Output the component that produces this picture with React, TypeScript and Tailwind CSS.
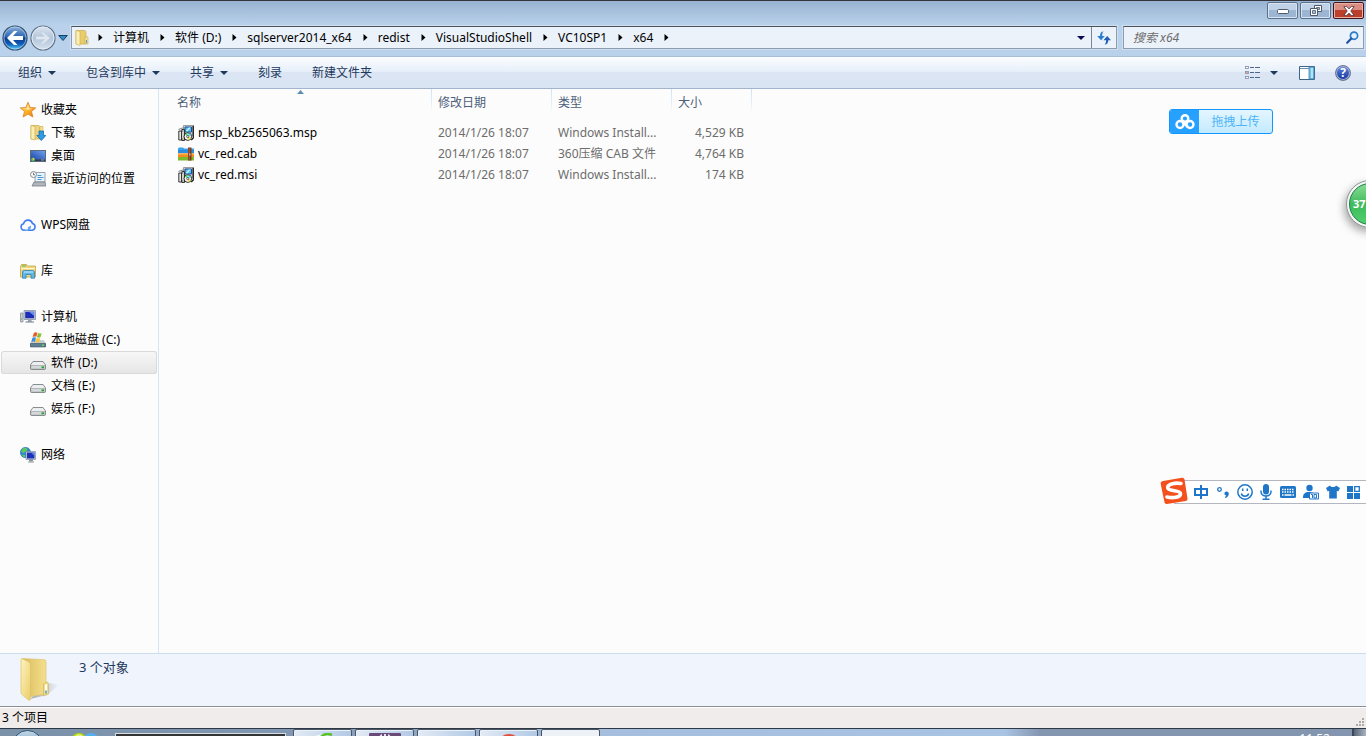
import { useState, type ReactNode } from 'react';

type IconName =
  | 'star' | 'download' | 'desktop' | 'recent' | 'cloud' | 'library'
  | 'computer' | 'systemDrive' | 'drive' | 'network' | 'installer' | 'archive';

const icons: Record<IconName, ReactNode> = {
  star: (
    <>
      <defs>
        <linearGradient id="star" x1="0" y1="0" x2="1" y2="1">
          <stop offset="0" stopColor="#ffe08a" />
          <stop offset=".5" stopColor="#fdb52b" />
          <stop offset="1" stopColor="#e8720c" />
        </linearGradient>
      </defs>
      <path d="M8 .3l2.200 5.200 5.500.4-4.200 3.600 1.400 5.500L8 12.100l-4.900 2.900 1.400-5.500L.3 5.900l5.500-.4z" fill="url(#star)" stroke="#d9801f" strokeWidth=".8" strokeLinejoin="round" />
      <path d="M8 2.500l1.300 3.800 3.200.3-4.300 1.400-4.700-1.400 3.200-.3z" fill="#fff3c4" opacity=".7" />
    </>
  ),
  download: (
    <>
      <path d="M1 .5h8l1 1V14H1z" fill="#ecd37c" stroke="#c9a945" strokeWidth=".7" />
      <path d="M1 .5l4 1V15l-4-1z" fill="#fbeeb4" stroke="#c9a945" strokeWidth=".6" />
      <path d="M10 1.500h3V8h-3z" fill="#f6e39c" stroke="#c9a945" strokeWidth=".6" />
      <path d="M9 6h4.500v4.500h2.300L11.300 15.500 6.800 10.500H9z" fill="#2f9be0" stroke="#1668b4" strokeWidth=".8" />
    </>
  ),
  desktop: (
    <>
      <defs>
        <linearGradient id="desk" x1="0" y1="1" x2="1" y2="0">
          <stop offset="0" stopColor="#1c46a8" />
          <stop offset="1" stopColor="#6ea0ec" />
        </linearGradient>
      </defs>
      <rect x="0" y="2" width="16" height="12" fill="#5d6b80" />
      <rect x="1" y="3" width="14" height="8.500" fill="url(#desk)" />
      <path d="M1 11.500h14V13H1z" fill="#2d3a50" />
      <circle cx="3" cy="11.500" r="1.900" fill="#55b36c" />
      <circle cx="3.400" cy="11" r=".9" fill="#f0c93c" />
      <path d="M11 12h3" stroke="#b9c6da" strokeWidth=".7" />
    </>
  ),
  recent: (
    <>
      <path d="M5 1.500h10V11H5z" fill="#eaf3fb" stroke="#8a98a6" strokeWidth=".9" />
      <path d="M7.500 4.500h4M7.500 6.500h6M7.500 8.500h4" stroke="#3f9bdc" strokeWidth="1.200" />
      <path d="M4 11h11l1 4H2z" fill="#b0b5ba" stroke="#767d84" strokeWidth=".8" />
      <circle cx="3.500" cy="3.500" r="3" fill="#f6f8fa" stroke="#858d95" />
      <path d="M3.500 1.800v2h1.500" stroke="#5f6972" strokeWidth=".9" fill="none" />
    </>
  ),
  cloud: (
    <>
      <path d="M5 13.200H4.200A3.300 3.300 0 0 1 3.600 6.700a4.600 4.600 0 0 1 8.900-.3 3.500 3.500 0 0 1-.3 6.800H8.200" fill="none" stroke="#3f7df0" strokeWidth="1.600" strokeLinecap="round" />
      <path d="M5 13.200c2.500.3 5-.8 5.200-3.300l-1.700.9" fill="none" stroke="#5aa0f5" strokeWidth="1.500" strokeLinecap="round" />
    </>
  ),
  library: (
    <>
      <path d="M.5 3.500V14h15V3H7.500L6.500 1.500H1.500z" fill="#efd883" stroke="#c2a243" strokeWidth=".8" />
      <path d="M2 3h4" stroke="#6cbf4d" strokeWidth="1.200" />
      <path d="M.8 5.500h14.400" stroke="#fff5c8" />
      <path d="M2.500 15.200V9c0-1 .8-1.500 1.800-1.500h8.400c1 0 1.800.5 1.800 1.500v6.200h-3.500V11.500H6v3.700z" fill="#62b6e6" stroke="#3182ba" strokeWidth=".8" />
      <path d="M4 9h9" stroke="#c9ebfb" />
    </>
  ),
  computer: (
    <>
      <path d="M.5 4h2.500v9H.5z" fill="#c9ced5" stroke="#7c848e" strokeWidth=".7" />
      <path d="M1 10h1" stroke="#43b64a" />
      <path d="M4 1.500h11.500v9H4z" fill="#cfd6df" stroke="#7b8591" strokeWidth=".7" />
      <path d="M5.200 2.700h9v6.600h-9z" fill="#1c2fb4" />
      <path d="M9 2.700h5.200v4.300z" fill="#6f8bf0" />
      <path d="M8.300 10.500h3l.7 2.500H7.500z" fill="#98a1ac" />
      <path d="M5.500 13h8.500" stroke="#8a929c" strokeWidth="1.200" />
    </>
  ),
  systemDrive: (
    <>
      <path d="M2.500 8.500h11L16 11.500V15H0v-3.500z" fill="#9aa3ad" />
      <path d="M2.500 8.500h11l2.200 3H.4z" fill="#c5ccd3" />
      <path d="M.5 11.500h15V15H.5z" fill="#5d7f92" stroke="#47535e" strokeWidth=".6" />
      <path d="M12 13.300h2" stroke="#55e05b" strokeWidth="1.500" />
      <path d="M3.800.9c1.200-.9 2.400-.9 3.600-.2L6.300 4.900c-1.200-.6-2.400-.5-3.600.2z" fill="#ea5a26" />
      <path d="M8.100 1c1.200.6 2.400.6 3.600-.1l-1.200 4.300c-1.200.6-2.400.6-3.600 0z" fill="#86bf3a" />
      <path d="M2.400 5.800c1.200-.7 2.400-.7 3.600-.1L4.900 9.900c-1.200-.6-2.400-.5-3.600.2z" fill="#3d8de0" />
      <path d="M6.600 6c1.200.6 2.400.6 3.600 0L9.100 10.100c-1.200.6-2.400.6-3.600 0z" fill="#f8c62c" />
    </>
  ),
  drive: (
    <>
      <path d="M3 6.500h10L15.500 10v3.500c0 .6-.4 1-1 1h-13c-.6 0-1-.4-1-1V10z" fill="#b4b7ba" stroke="#74787c" strokeWidth=".8" strokeLinejoin="round" />
      <path d="M3.200 6.900h9.600l2.200 3.200H1z" fill="#eceeef" />
      <path d="M1.500 11h13v2.500h-13z" fill="#d5d8da" />
      <path d="M11.500 12.300h2.500" stroke="#1fa52c" strokeWidth="1.800" />
    </>
  ),
  network: (
    <>
      <circle cx="5.500" cy="5.500" r="5.200" fill="#2f86d2" stroke="#2768a6" strokeWidth=".5" />
      <path d="M3 1.200c2 0 4-.6 4.500 1.500L5.500 5 3 6 1 4.500zM2 7.500l3 .5v2.300c-1.500 0-2.800-1.300-3-2.800z" fill="#5cc95a" />
      <path d="M6 4.500h9.500v8H6z" fill="#cdd5e0" stroke="#77828f" strokeWidth=".6" />
      <path d="M7 5.500h7.500v6H7z" fill="#1b31ba" />
      <path d="M11 5.500h3.500V9z" fill="#6d8bf2" />
      <path d="M9.500 12.500h3v1.500h-3zM8 15h6" fill="#8b949e" stroke="#8b949e" />
    </>
  ),
  installer: (
    <>
      <path d="M5.500 .5h9V11h-9z" fill="#d5d2ca" stroke="#8a8a8a" strokeWidth=".8" />
      <path d="M15.300 .5V13l-2 2" stroke="#111" strokeWidth="1.200" fill="none" />
      <path d="M7 2h6.500v5H7z" fill="#4fc2ef" stroke="#1a4fa0" />
      <path d="M7.800 6l3-3.500h2L9.300 6.500z" fill="#c6f1ff" />
      <path d="M.8 6h2.700v9H.8z" fill="#e6e5e0" stroke="#222" strokeWidth=".9" />
      <path d="M3.800 4.500h2.700v11H3.800z" fill="#c2c1bb" stroke="#222" strokeWidth=".9" />
      <path d="M.5 4.500l4-1.500h2" stroke="#888" strokeWidth="1.200" fill="none" />
      <path d="M4.800 7v6" stroke="#fff" strokeWidth=".8" />
      <circle cx="9.800" cy="11.600" r="3.800" fill="#f4f5f1" stroke="#111" strokeWidth=".9" />
      <path d="M9.800 11.600L6.900 9.600a3.600 3.600 0 0 1 2.400-1.500z" fill="#3fdc74" />
      <path d="M9.800 11.600l3.200 1.500a3.600 3.600 0 0 1-2.700 1.900z" fill="#f2e24a" />
      <path d="M9.800 11.600l1-3.400a3.600 3.600 0 0 1 2.200 1.700z" fill="#4fd4f0" />
      <circle cx="9.800" cy="11.600" r="1.100" fill="#fff" stroke="#222" strokeWidth=".7" />
    </>
  ),
  archive: (
    <>
      <path d="M0 2.500L1 1.500h4l1 1h10V7H0z" fill="#3aa2ea" />
      <path d="M0 4h16v3.500H0z" fill="#2d8bdc" />
      <path d="M0 7.500h16v4H0z" fill="#f58a1f" />
      <path d="M0 7.500h16v1H0z" fill="#ffc062" />
      <path d="M0 11h16v3.500H0z" fill="#7cb92c" />
      <path d="M10 1.500h3.500v13H10z" fill="#7a3a1d" />
      <path d="M11.200 2v12" stroke="#b5714a" strokeWidth=".8" />
      <path d="M11 7.500h1.500v2H11z" fill="#c9b9a4" />
    </>
  ),
};

function Icon({ name }: { name: IconName }) {
  return (
    <svg viewBox="0 0 16 16" className="w-4 h-4 shrink-0" aria-hidden="true">
      {icons[name]}
    </svg>
  );
}

function DownArrow({ className = 'text-[#1e395b]' }: { className?: string }) {
  return (
    <svg viewBox="0 0 8 4" className={`w-2 h-1 shrink-0 ${className}`} aria-hidden="true">
      <path d="M0 0h8L4 4z" fill="currentColor" />
    </svg>
  );
}

function FolderArt({ className }: { className: string }) {
  return (
    <svg viewBox="0 0 40 46" className={className} aria-hidden="true">
      <defs>
        <linearGradient id="folderBack" x1="0" y1="0" x2="1" y2="0">
          <stop offset="0" stopColor="#d9b95a" />
          <stop offset="1" stopColor="#f5e08e" />
        </linearGradient>
        <linearGradient id="folderFront" x1="0" y1="0" x2="1" y2="1">
          <stop offset="0" stopColor="#fdf3bd" />
          <stop offset="1" stopColor="#ecce6a" />
        </linearGradient>
        <linearGradient id="folderShade" x1="0" y1="0" x2="1" y2="0">
          <stop offset="0" stopColor="#8a94a4" stopOpacity=".8" />
          <stop offset="1" stopColor="#8a94a4" stopOpacity="0" />
        </linearGradient>
      </defs>
      <path d="M11 42L31 26l9 2-12 10z" fill="url(#folderShade)" />
      <path d="M3 1.500l22 1.200q2 0 2 2V37l-17 3z" fill="url(#folderBack)" stroke="#d9bd62" strokeWidth=".6" />
      <path d="M24.500 27l3-2q2 0 2 2v10l-5 2z" fill="#f3dc86" stroke="#cfae4d" strokeWidth=".6" />
      <path d="M27 27.500v8" stroke="#fff" strokeWidth="2" />
      <path d="M27 33.500v3" stroke="#4b9be0" strokeWidth="1.600" />
      <path d="M2 3q0-2 2-1l6 3q1.500 1 1.500 3v34q0 2-2 1L3.500 38Q2 37 2 35z" fill="url(#folderFront)" stroke="#dcc067" strokeWidth=".7" />
    </svg>
  );
}

const crumbs = ['计算机', '软件 (D:)', 'sqlserver2014_x64', 'redist', 'VisualStudioShell', 'VC10SP1', 'x64'];

const toolbar = [
  { label: '组织', menu: true },
  { label: '包含到库中', menu: true },
  { label: '共享', menu: true },
  { label: '刻录', menu: false },
  { label: '新建文件夹', menu: false },
];

interface NavItem {
  label: string;
  icon: IconName;
}

const navGroups: { head: NavItem; items: NavItem[] }[] = [
  {
    head: { label: '收藏夹', icon: 'star' },
    items: [
      { label: '下载', icon: 'download' },
      { label: '桌面', icon: 'desktop' },
      { label: '最近访问的位置', icon: 'recent' },
    ],
  },
  { head: { label: 'WPS网盘', icon: 'cloud' }, items: [] },
  { head: { label: '库', icon: 'library' }, items: [] },
  {
    head: { label: '计算机', icon: 'computer' },
    items: [
      { label: '本地磁盘 (C:)', icon: 'systemDrive' },
      { label: '软件 (D:)', icon: 'drive' },
      { label: '文档 (E:)', icon: 'drive' },
      { label: '娱乐 (F:)', icon: 'drive' },
    ],
  },
  { head: { label: '网络', icon: 'network' }, items: [] },
];

const files: { name: string; icon: IconName; date: string; type: string; size: string }[] = [
  { name: 'msp_kb2565063.msp', icon: 'installer', date: '2014/1/26 18:07', type: 'Windows Install...', size: '4,529 KB' },
  { name: 'vc_red.cab', icon: 'archive', date: '2014/1/26 18:07', type: '360压缩 CAB 文件', size: '4,764 KB' },
  { name: 'vc_red.msi', icon: 'installer', date: '2014/1/26 18:07', type: 'Windows Install...', size: '174 KB' },
];

const headCell =
  'h-[26px] pt-[2px] pl-[6px] text-left font-normal bg-[linear-gradient(#d3e3f1,#e4edf6_60%,#fcfcfc)] bg-[length:1px_23px] bg-[position:right_top] bg-no-repeat';

function TitleBar() {
  const glass = 'flex h-[17px] items-center justify-center rounded-[2px] border border-[#5c7189] shadow-[inset_0_0_0_1px_#d6e4f2] bg-linear-to-b from-[#bfd2e7] from-50% to-[#9bb5d2] to-50%';
  return (
    <div className="flex h-[25px] shrink-0 justify-end gap-[2px] border-t border-[#33343a] bg-linear-to-b from-[#98b3d2] to-[#b9d1ea] pr-[2px] pt-px">
      <button aria-label="最小化" className={`w-[31px] ${glass}`}>
        <svg viewBox="0 0 12 6" className="h-[6px] w-3"><rect x=".5" y="1.500" width="11" height="4" rx="1" fill="#fff" stroke="#4c5a6c" /></svg>
      </button>
      <button aria-label="还原" className={`w-[31px] ${glass}`}>
        <svg viewBox="0 0 12 11" className="h-[11px] w-3">
          <path d="M4.500.5h7v6h-7z" fill="#fff" stroke="#4c5a6c" />
          <path d="M6.500 2.500h3v2h-3z" fill="#a5bcd6" stroke="#4c5a6c" strokeWidth=".8" />
          <path d="M.5 3.500h7v7h-7z" fill="#fff" stroke="#4c5a6c" />
          <path d="M2.500 5.500h3v3h-3z" fill="#a5bcd6" stroke="#4c5a6c" strokeWidth=".8" />
        </svg>
      </button>
      <button aria-label="关闭" className="flex h-[17px] w-[31px] items-center justify-center rounded-[2px] border border-[#43131a] bg-linear-to-b from-[#d98d83] from-50% to-[#bb3f2b] to-50% shadow-[inset_0_0_0_1px_#e9b1a8]">
        <svg viewBox="0 0 12 10" className="h-[10px] w-3">
          <path d="M.8.6h3L6 2.900 8.200.6h3L7.800 5l3.400 4.400h-3L6 7.100 3.800 9.400h-3L4.200 5z" fill="#fff" stroke="#5a3a42" strokeWidth=".9" />
        </svg>
      </button>
    </div>
  );
}

function NavButtons() {
  return (
    <div className="flex w-[70px] shrink-0 items-center gap-[2px] pl-[2px]">
      <button aria-label="后退" className="h-[26px] w-[26px]">
        <svg viewBox="0 0 26 26" className="h-[26px] w-[26px]">
          <defs>
            <linearGradient id="back" x1="0" y1="0" x2="0" y2="1">
              <stop offset="0" stopColor="#8fb4dd" />
              <stop offset=".45" stopColor="#2c66b4" />
              <stop offset=".5" stopColor="#0b3c8c" />
              <stop offset=".75" stopColor="#0f5cba" />
              <stop offset="1" stopColor="#5fdcff" />
            </linearGradient>
          </defs>
          <circle cx="13" cy="13" r="12" fill="url(#back)" stroke="#38506f" strokeWidth="1.200" />
          <circle cx="13" cy="13" r="11" fill="none" stroke="#c5def3" strokeOpacity=".6" />
          <path d="M5 13l7-7h3.500l-4.500 5h10v4H11l4.500 5H12z" fill="#fff" />
        </svg>
      </button>
      <button aria-label="前进" className="h-[26px] w-[26px]">
        <svg viewBox="0 0 26 26" className="h-[26px] w-[26px]">
          <defs>
            <linearGradient id="fwd" x1="0" y1="0" x2="0" y2="1">
              <stop offset="0" stopColor="#dbe6f1" />
              <stop offset=".5" stopColor="#b3c5d9" />
              <stop offset="1" stopColor="#d5e2ef" />
            </linearGradient>
          </defs>
          <circle cx="13" cy="13" r="12" fill="url(#fwd)" stroke="#5f7188" strokeWidth="1.200" />
          <circle cx="13" cy="13" r="11" fill="none" stroke="#e4edf6" />
          <path d="M20 13l-7-6h-2.500l4 4.500H6v3h8.500l-4 4.500H13z" fill="#dfe8f1" stroke="#c3d0de" strokeWidth=".6" />
        </svg>
      </button>
      <button aria-label="最近的页面">
        <svg viewBox="0 0 10 6" className="h-[6px] w-[10px]"><path d="M.7.500h8.600L5 5.500z" fill="#2f8ec5" stroke="#1d3d66" /></svg>
      </button>
    </div>
  );
}

function AddressRow() {
  const [query, setQuery] = useState('');
  return (
    <div className="flex h-[31px] shrink-0 items-start bg-[#b9d1ea] pr-[2px]">
      <NavButtons />
      <div className="ml-px mt-px flex h-[23px] min-w-0 flex-1 items-center border border-[#8c9db0] border-t-[#4a525c] bg-[#ebf2fa] outline outline-[#cfdff0]">
        <svg viewBox="0 0 14 16" className="ml-[3px] h-4 w-[14px] shrink-0" aria-hidden="true">
          <path d="M1 .5h9l1 1V14H1z" fill="#e8cc6e" stroke="#cfae4a" strokeWidth=".7" />
          <path d="M1 .5l4 1V15.500L1 14z" fill="#fbeeb4" stroke="#cfae4a" strokeWidth=".6" />
          <path d="M10 7h3v7h-3z" fill="#f6e39c" stroke="#c9a945" strokeWidth=".6" />
          <path d="M11.500 10v3" stroke="#4b9be0" />
        </svg>
        <nav aria-label="地址" className="ml-[9px] flex flex-1 items-center">
          {crumbs.map((crumb) => (
            <span key={crumb} className="flex items-center">
              <CrumbArrow />
              <a href="#" className="pr-[11px] pl-[10px] whitespace-nowrap text-black">{crumb}</a>
            </span>
          ))}
          <CrumbArrow />
        </nav>
        <button aria-label="以前的位置" className="flex h-full w-5 items-center justify-center">
          <DownArrow className="text-[#0a0a50]" />
        </button>
        <button aria-label="刷新" className="flex h-full w-[25px] items-center justify-center border-l border-[#7a8796]">
          <svg viewBox="0 0 14 14" className="h-[14px] w-[14px]">
            <path d="M6.500 .5C4 .5 3 2.500 3 5H.2L4 9.200 7.800 5H5.200C5.200 3 5.500 1.500 6.500.5z" fill="#2c7fd0" />
            <path d="M7.500 13.500c2.500 0 3.800-1.500 3.800-4.300H14L10.200 5 6.400 9.200h2.700c0 1.800-.4 3.300-1.600 4.300z" fill="#2260b5" />
          </svg>
        </button>
      </div>
      <div className="ml-[6px] mt-px flex h-[23px] w-[241px] items-center border border-[#8c9db0] border-t-[#4a525c] bg-[#ebf2fa] pr-1 outline outline-[#cfdff0]">
        <input
          aria-label="搜索 x64"
          placeholder="搜索 x64"
          value={query}
          onChange={(e) => setQuery(e.target.value)}
          className="min-w-0 flex-1 bg-transparent pl-[9px] outline-none placeholder:italic placeholder:text-[#6d6d6d]"
        />
        <button aria-label="搜索">
          <svg viewBox="0 0 13 13" className="h-[13px] w-[13px]">
            <circle cx="8" cy="4.700" r="3.600" fill="#e3f2fd" stroke="#2a7bc8" strokeWidth="1.700" />
            <path d="M5.300 7.500L1.200 11.700" stroke="#1d56a5" strokeWidth="2.200" strokeLinecap="round" />
          </svg>
        </button>
      </div>
    </div>
  );
}

function CrumbArrow() {
  return (
    <svg viewBox="0 0 5 7" className="h-[7px] w-[5px] shrink-0" aria-hidden="true">
      <path d="M.5 0v7L4.500 3.500z" fill="#000" />
    </svg>
  );
}

function Toolbar() {
  return (
    <div className="flex h-[33px] shrink-0 items-center border-t border-b border-t-[#a9bfd9] border-b-[#a3b4cf] bg-[linear-gradient(#fbfdff,#e6eff9_48%,#dbe5f4_49%,#dae5f3)] pl-[10px] pr-[14px] text-[#1e395b]">
      <div className="flex flex-1 gap-[14px]">
        {toolbar.map((item) => (
          <button key={item.label} className="flex items-center gap-[6px] px-2">
            {item.label}
            {item.menu && <DownArrow />}
          </button>
        ))}
      </div>
      <button aria-label="更改您的视图" className="flex items-center gap-[10px]">
        <svg viewBox="0 0 15 13" className="h-[13px] w-[15px]">
          {[0, 5, 10].map((y) => (
            <g key={y}>
              <rect x=".5" y={y + 0.5} width="3" height="2" fill="#fff" stroke="#7b8ba3" strokeWidth=".8" />
              <path d={`M5 ${y + 1.5}h4M10 ${y + 1.5}h5`} stroke="#4c6588" />
            </g>
          ))}
          <path d="M1.500 6.500h1" stroke="#e03a2a" />
        </svg>
        <DownArrow />
      </button>
      <button aria-label="显示预览窗格" className="ml-[21px]">
        <svg viewBox="0 0 16 14" className="h-[14px] w-4">
          <path d="M.5.5h15v13H.5z" fill="#fff" stroke="#3f648c" />
          <path d="M1 2.500h9" stroke="#6c8cb0" />
          <path d="M10 1h5v12h-5z" fill="#74c4e8" stroke="#3f7ea8" strokeWidth=".8" />
          <path d="M13 2v10" stroke="#c5effc" strokeWidth="1.500" />
        </svg>
      </button>
      <button aria-label="获取帮助" className="ml-[20px] mr-px h-4 w-4 rounded-full border border-[#6e7890] bg-linear-to-b from-[#6489df] to-[#12309c] text-xs leading-[14px] font-bold text-white shadow-[inset_0_0_0_1px_#a9b8dc]">
        ?
      </button>
    </div>
  );
}

function Sidebar() {
  const row = 'flex h-[23px] w-full items-center gap-[5px] text-left';
  return (
    <aside className="w-[159px] shrink-0 border-r border-[#d6e5f5] px-px pt-[9px]">
      <ul className="flex flex-col gap-[23px]">
        {navGroups.map(({ head, items }) => (
          <li key={head.label}>
            <button className={`${row} pl-[19px]`}>
              <Icon name={head.icon} />
              {head.label}
            </button>
            {items.map((item) => (
              <button
                key={item.label}
                className={`${row} pl-[29px] ${
                  item.label === '软件 (D:)'
                    ? 'bg-[linear-gradient(#f8f8f8,#e5e5e5)] rounded-[3px] shadow-[inset_0_0_0_1px_#d9d9d9]'
                    : ''
                }`}
              >
                <Icon name={item.icon} />
                {item.label}
              </button>
            ))}
          </li>
        ))}
      </ul>
    </aside>
  );
}

function FileTable() {
  return (
    <div className="min-w-0 flex-1">
      <table className="w-[593px] table-fixed border-collapse">
        <colgroup>
          <col className="w-[273px]" />
          <col className="w-[120px]" />
          <col className="w-[120px]" />
          <col className="w-[80px]" />
        </colgroup>
        <thead className="text-[#4c607a]">
          <tr>
            <th className={`${headCell} relative pl-[18px]`}>
              名称
              <svg viewBox="0 0 7 4" className="absolute top-px left-[138px] h-1 w-[7px]" aria-hidden="true">
                <path d="M0 4l3.500-4L7 4z" fill="#5e8fae" />
              </svg>
            </th>
            <th className={headCell}>修改日期</th>
            <th className={headCell}>类型</th>
            <th className={headCell}>大小</th>
          </tr>
        </thead>
        <tbody className="text-[#6d6d6d] before:block before:h-[7px]">
          {files.map((file) => (
            <tr key={file.name} className="h-[21px]">
              <td className="pl-[19px] text-black">
                <span className="flex items-center gap-1">
                  <Icon name={file.icon} />
                  {file.name}
                </span>
              </td>
              <td className="pl-[6px] whitespace-nowrap">{file.date}</td>
              <td className="pl-[6px] whitespace-nowrap">{file.type}</td>
              <td className="pr-2 text-right whitespace-nowrap">{file.size}</td>
            </tr>
          ))}
        </tbody>
      </table>
    </div>
  );
}

function UploadWidget() {
  return (
    <button className="absolute top-[109px] right-[93px] flex h-[25px] w-[104px] items-center overflow-hidden rounded-[3px] border border-[#1496ff] bg-linear-to-b from-[#e4f6ff] to-[#c3eaff] text-[#4db4f7]">
      <span className="flex h-full w-[29px] items-center justify-center bg-[#26a1ff]">
        <svg viewBox="0 0 20 16" className="h-4 w-5" fill="none" stroke="#fff" strokeWidth="2.400">
          <circle cx="10" cy="4.500" r="3.300" />
          <circle cx="5" cy="10.500" r="3.500" />
          <circle cx="15" cy="10.500" r="3.500" />
          <path d="M7.500 8l5.500 5" />
        </svg>
      </span>
      <span className="flex-1">拖拽上传</span>
    </button>
  );
}

function SpeedBall() {
  return (
    <div className="absolute top-[180px] -right-[28px] h-12 w-12 rounded-full border border-[#8f9692] bg-[#f4f6f5] p-[2px] shadow-[-2px_4px_8px_#0005]">
      <div className="flex h-full items-center rounded-full border border-[#1d7d48] bg-linear-to-b from-[#86dc96] via-[#3dbb5c] to-[#52d06c] pl-[3px] text-[11px] font-bold text-white">
        37
      </div>
    </div>
  );
}

function ImeBar() {
  return (
    <div className="absolute top-[480px] right-0 flex h-6 w-[192px] items-center justify-between border-y border-[#b4b7c0] bg-white pl-[19px] pr-[5px] text-[#1f76c9]">
      <svg viewBox="0 0 28 28" className="absolute -top-[4px] -left-[14px] h-7 w-7" aria-hidden="true">
        <path d="M3 4L22 .8q2-.3 2.500 1.700l3 19q.2 2-1.700 2.500L7 27q-2 .3-2.500-1.700L.7 7Q.3 4.700 3 4z" fill="#f2501c" />
        <path d="M21 6.500C16 5.500 7.500 6.500 7.700 10.700c.2 4.300 12.800 1.800 12.800 6 0 4-8 4.500-13.500 3.300" fill="none" stroke="#fff" strokeWidth="3.600" strokeLinecap="round" />
      </svg>
      <button aria-label="中文" className="w-4">
        <svg viewBox="0 0 16 16" className="h-4 w-4" fill="none" stroke="currentColor" strokeWidth="2"><path d="M2 5h12v6H2zM8 1v14" /></svg>
      </button>
      <button aria-label="标点">
        <svg viewBox="0 0 14 16" className="h-4 w-[14px]">
          <circle cx="3.500" cy="5.500" r="1.800" fill="none" stroke="currentColor" strokeWidth="1.300" />
          <path d="M10.500 7.500a2.300 2.300 0 0 1 2.300 2.300c0 2.200-1.500 3.900-3.600 4.200l-.4-1c1-.4 1.500-.9 1.500-1.500A2 2 0 0 1 10.500 7.500z" fill="currentColor" />
        </svg>
      </button>
      <button aria-label="表情">
        <svg viewBox="0 0 16 16" className="h-4 w-4" fill="none" stroke="currentColor" strokeWidth="1.500">
          <circle cx="8" cy="8" r="7.200" />
          <path d="M4.300 9.500c1 3.500 6.400 3.500 7.400 0M5.700 4.500v2.500M10.300 4.500v2.500" />
        </svg>
      </button>
      <button aria-label="语音">
        <svg viewBox="0 0 12 16" className="h-4 w-3">
          <rect x="3" y="0" width="6" height="10.500" rx="3" fill="currentColor" />
          <path d="M1 6.500v1c0 6 10 6 10 0v-1M6 12v3M2.500 15.200h7" fill="none" stroke="currentColor" strokeWidth="1.500" />
        </svg>
      </button>
      <button aria-label="软键盘">
        <svg viewBox="0 0 16 12" className="h-3 w-4">
          <rect width="16" height="12" rx="1.500" fill="currentColor" />
          <path d="M2 3.500h12M2 6h12" stroke="#fff" strokeWidth="1.300" strokeDasharray="1.500 1" />
          <path d="M2 9h1.500M4.500 9h7M12.500 9H14" stroke="#fff" strokeWidth="1.300" />
        </svg>
      </button>
      <button aria-label="登录">
        <svg viewBox="0 0 16 16" className="h-4 w-4">
          <circle cx="6.500" cy="4" r="3.200" fill="currentColor" />
          <path d="M0 13c0-3 2-5 6-5s5 1 6 3v3H0z" fill="currentColor" />
          <path d="M6.500 9h9v6h-9z" fill="#fff" stroke="currentColor" />
          <path d="M8 10.500h1.500V14M11 10.500h2.500V14H11z" fill="none" stroke="currentColor" />
        </svg>
      </button>
      <button aria-label="皮肤">
        <svg viewBox="0 0 14 14" className="h-[14px] w-[14px]"><path d="M4 .5c1 2 5 2 6 0l4 2.500-1.700 3.500-1.500-.7V13.500H3.200V5.800l-1.500.7L0 3z" fill="currentColor" /></svg>
      </button>
      <button aria-label="工具箱">
        <svg viewBox="0 0 14 13" className="h-[13px] w-[14px]">
          <path d="M0 0h6v6H0zM0 7h6v6H0zM7 7h6v6H7z" fill="currentColor" />
          <path d="M7.700.7h4.600v4.600H7.700z" fill="none" stroke="currentColor" strokeWidth="1.300" />
        </svg>
      </button>
    </div>
  );
}

function Taskbar() {
  const task = 'flex h-8 w-[59px] shrink-0 justify-center rounded-[2px] border border-[#4b5563] pt-[3px] shadow-[inset_1px_1px_0_#e9f1fa]';
  return (
    <div className="flex h-2 shrink-0 items-start overflow-hidden border-t border-[#2e3947] bg-[linear-gradient(90deg,#7b91a8_0,#8197b2_290px,#a5bedd_600px,#a9c3e2_1005px,#8495b0_1040px)]">
      <button aria-label="开始" className="ml-3 mt-px h-[31px] w-[31px] shrink-0 rounded-full border border-[#2d5878] bg-linear-to-b from-[#c4d8e6] to-[#2c6c9f]" />
      <svg viewBox="0 0 28 20" className="mt-1 ml-7 h-5 w-7 shrink-0" aria-hidden="true">
        <circle cx="8" cy="8" r="8" fill="#b5d80c" />
        <circle cx="20" cy="8" r="8" fill="#55aef0" />
        <path d="M5 3q3-2 6 0" stroke="#e8f58a" strokeWidth="1.500" fill="none" />
      </svg>
      <div className="mt-1 mr-[7px] ml-4 h-6 w-[171px] shrink-0 border border-[#d7dde5] bg-[#343434]" />
      <div className="flex flex-1 gap-[3px]">
        <button aria-label="浏览器" className={`${task} bg-linear-to-r from-[#e3eaf4] to-[#b1c9e6]`}>
          <svg viewBox="0 0 24 20" className="h-5 w-6"><path d="M1 5Q8-1 18 3v17H1z" fill="#f3f8f4" /><path d="M9 5Q14-1 21 2" stroke="#58c22b" strokeWidth="2.500" fill="none" /></svg>
        </button>
        <button aria-label="录音" className={`${task} bg-linear-to-r from-[#e3eaf4] to-[#b1c9e6]`}>
          <svg viewBox="0 0 32 20" className="h-5 w-8"><rect width="32" height="20" rx="1" fill="#6a4a78" /><path d="M10 6q2-4 3-4M16 1v8M22 6q-2-4-3-4" stroke="#e8e0ee" strokeWidth="2" fill="none" /></svg>
        </button>
        <button aria-label="窗口" className={`${task} bg-linear-to-r from-[#e3eaf4] to-[#b1c9e6]`} />
        <button aria-label="网页" className={`${task} bg-linear-to-r from-[#e3eaf4] to-[#b1c9e6]`}>
          <svg viewBox="0 0 24 20" className="mt-px h-5 w-6"><circle cx="12" cy="12" r="12" fill="#e2503c" /></svg>
        </button>
        <button aria-label="资源管理器" className={`${task} bg-[#eef2f7]`}>
          <svg viewBox="0 0 16 10" className="mt-[2px] h-[10px] w-4"><path d="M1 1h14v9H1z" fill="#cdbb72" /></svg>
        </button>
      </div>
      <time className="mt-[2px] mr-[22px] text-white">11:52</time>
      <button aria-label="显示桌面" className="h-8 w-[14px] border-l-2 border-[#3b4658] bg-linear-to-r from-[#5a6576] to-[#a9b3c2]" />
    </div>
  );
}

export default function App() {
  return (
    <div className="relative flex h-screen flex-col overflow-hidden bg-[#fcfcfc] font-['Noto_Sans','Noto_Sans_CJK_SC',sans-serif] text-xs leading-4 text-black">
      <TitleBar />
      <AddressRow />
      <Toolbar />
      <main className="flex min-h-0 flex-1">
        <Sidebar />
        <FileTable />
      </main>
      <section aria-label="详细信息" className="flex h-[53px] shrink-0 gap-5 border-t border-[#cbdcee] bg-[#f0f4fc] pl-[19px] text-[#1e395b]">
        <FolderArt className="mt-[3px] h-[46px] w-10" />
        <p className="pt-[5px] text-[13px]">3 个对象</p>
      </section>
      <footer className="relative flex h-[22px] shrink-0 items-center border-t border-[#8b8f8f] bg-[#f0eceb] pl-[2px] shadow-[inset_0_1px_#fff]">
        3 个项目
        <svg viewBox="0 0 8 8" className="absolute right-[2px] bottom-[2px] h-2 w-2" fill="#b0abaa" aria-hidden="true">
          <path d="M6 0h2v2H6zM3 3h2v2H3zM6 3h2v2H6zM0 6h2v2H0zM3 6h2v2H3zM6 6h2v2H6z" />
        </svg>
      </footer>
      <Taskbar />
      <UploadWidget />
      <SpeedBall />
      <ImeBar />
    </div>
  );
}
